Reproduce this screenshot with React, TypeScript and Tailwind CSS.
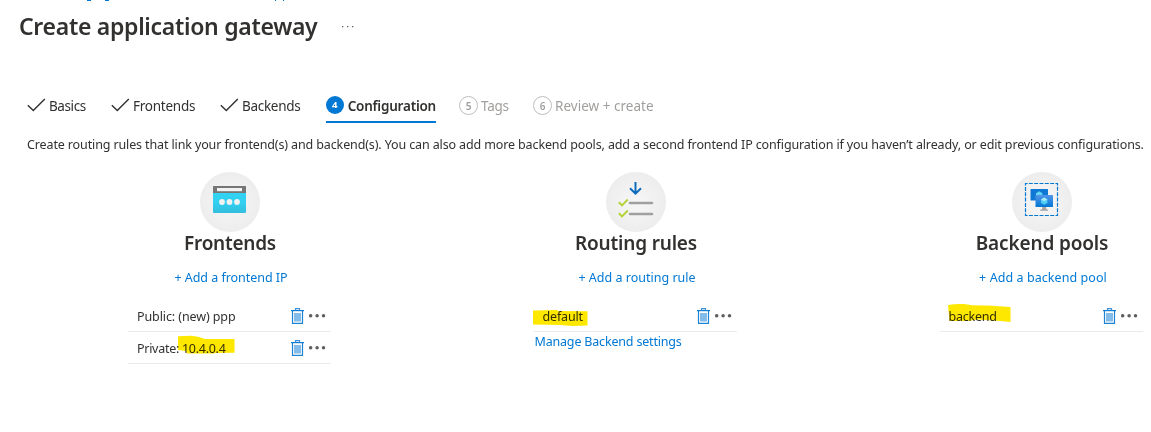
import type { ReactNode } from "react";

const CheckMark = () => (
  <svg className="mr-[3px] block h-5 w-[19px]" viewBox="0 0 19 20" fill="none">
    <path d="M0.8 9.3 L6.3 14.6 L17.8 3" stroke="#323130" strokeWidth="1.4" />
  </svg>
);

const Trash = () => (
  <svg className="block h-4 w-[13px]" viewBox="0 0 13 16" fill="none">
    <path d="M0 2.6H13" stroke="#0f7bd0" strokeWidth="1.2" />
    <path d="M4.5 2.5V0.7H8.5V2.5" stroke="#3c93dc" strokeWidth="1.2" />
    <path d="M1.5 3V15.3H11.5V3" stroke="#1f83d4" strokeWidth="1.2" />
    <path d="M3 5H10V13.5H3Z" fill="#83bbe9" />
  </svg>
);

const Dots = () => (
  <svg className="ml-[5px] block h-4 w-[18px]" viewBox="0 0 18 16" fill="#605e5c">
    <circle cx="1.7" cy="7.7" r="1.75" />
    <circle cx="8.1" cy="7.7" r="1.75" />
    <circle cx="14.5" cy="7.7" r="1.75" />
  </svg>
);

const FrontendIcon = () => (
  <svg className="block h-[60px] w-[60px]" viewBox="0 0 60 60">
    <defs>
      <linearGradient id="fe" x1="0" y1="0" x2="0" y2="1">
        <stop offset="0" stopColor="#32d4f5" />
        <stop offset="0.6" stopColor="#32d0f1" />
        <stop offset="1" stopColor="#32bedd" />
      </linearGradient>
    </defs>
    <rect x="13" y="14" width="33" height="27" rx="1" fill="url(#fe)" />
    <path d="M13 21V15a1 1 0 0 1 1-1H45a1 1 0 0 1 1 1V21Z" fill="#767676" />
    <rect x="17" y="16" width="25" height="3.2" fill="#f2f2f2" />
    <circle cx="22" cy="30" r="2.9" fill="#f2f2f2" />
    <circle cx="29.5" cy="30" r="2.9" fill="#f2f2f2" />
    <circle cx="37" cy="30" r="2.9" fill="#f2f2f2" />
  </svg>
);

const RulesIcon = () => (
  <svg className="block h-[60px] w-[60px]" viewBox="0 0 60 60" fill="none">
    <path d="M29.5 10V21.5M24 16.2L29.5 21.7L35 16.2" stroke="#0f6cbd" strokeWidth="2" />
    <path d="M24 31H46M24 42H46" stroke="#a0a0a0" strokeWidth="2.6" strokeLinecap="round" />
    <path d="M12.8 30.2L16 33.3L21.8 27.5M12.8 41.2L16 44.3L21.8 38.5" stroke="#b4d335" strokeWidth="1.9" />
  </svg>
);

const PoolIcon = () => (
  <svg className="block h-[60px] w-[60px]" viewBox="0 0 60 60" fill="none">
    <defs>
      <linearGradient id="scr" x1="0" y1="1" x2="0" y2="0">
        <stop offset="0" stopColor="#0078d4" />
        <stop offset="1" stopColor="#5495ea" />
      </linearGradient>
    </defs>
    <rect x="13.5" y="11.5" width="32" height="32" stroke="#0078d4" strokeWidth="1.2" strokeDasharray="4 1.33" strokeDashoffset="2" />
    <rect x="18.5" y="17" width="17.5" height="11.5" rx="0.5" fill="#0f78d4" />
    <path d="M24 23.5V21.2L27.2 19.2L30.4 21.2V23.5Z" fill="#62d5f4" />
    <path d="M30.4 35h3.6l.5 2.6h1.5v1.2H28.2v-1.2h1.7Z" fill="#a3a3a3" />
    <rect x="23.5" y="23" width="17.5" height="12" rx="0.5" fill="url(#scr)" />
    <path d="M32.2 25.6L35.4 27.4V31L32.2 32.8L29 31V27.4Z" fill="#50cdf2" />
    <path d="M32.2 25.6L35.4 27.4L32.2 29.2L29 27.4Z" fill="#a9ecfb" />
  </svg>
);

function Column({ icon, title, titleClass, link, linkClass, children }: {
  icon: ReactNode;
  title: string;
  titleClass: string;
  link: string;
  linkClass: string;
  children: ReactNode;
}) {
  return (
    <section className="flex w-[203px] flex-col">
      <div className="ml-[72px] h-[60px] w-[60px] rounded-full bg-radial from-[#f7f7f7] to-[#e9e9e9]">{icon}</div>
      <h2 className={`ml-px text-center text-[19px] leading-[22px] font-[560] ${titleClass}`}>{title}</h2>
      <a className={`mt-3.5 mb-3 ml-[3px] block text-center leading-5 text-[#0078d4] ${linkClass}`}>{link}</a>
      {children}
    </section>
  );
}

function Row({ children }: { children: ReactNode }) {
  return (
    <div className="flex h-8 items-center border-b border-[#edebe9] pr-1 pl-[9px]">
      <div className="relative flex-1 pt-0.5 leading-5">{children}</div>
      <Trash />
      <Dots />
    </div>
  );
}

const Marker = ({ d, place }: { d: string; place: string }) => (
  <svg className={`absolute h-5 w-[66px] mix-blend-multiply ${place}`} viewBox="0 0 66 20">
    <path d={d} fill="#ffe800" />
  </svg>
);

export default function App() {
  return (
    <main className="h-[432px] w-[1151px] overflow-hidden bg-white font-['Noto_Sans',sans-serif] text-[12.5px] whitespace-nowrap text-[#323130]">
      <svg className="block h-2.5 w-full" viewBox="0 0 1151 10" fill="#0078d4">
        <path d="M87 0h4v1h-4zM105 0h4v1h-4zM275 0h1v1h-1zM283 0h1v1h-1z" />
      </svg>
      <header className="flex h-8 items-center pl-[19px]">
        <h1 className="w-[323px] text-[23px] leading-[34px] font-[560] tracking-[-0.3px]">Create application gateway</h1>
        <svg className="h-3 w-3" viewBox="0 0 12 12" fill="#605e5c">
          <path d="M0 6h1.3v1.3H0zM5 6h1.3v1.3H5zM10 6h1.3v1.3H10z" />
        </svg>
      </header>

      <nav className="mt-[54px] flex h-[27px] pl-[27px] text-[13.5px] leading-5">
        <div className="flex w-[84px]"><CheckMark /><span className="tracking-[-0.4px]">Basics</span></div>
        <div className="flex w-[109px]"><CheckMark /><span className="tracking-[-0.25px]">Frontends</span></div>
        <div className="flex w-[106px]"><CheckMark /><span className="tracking-[-0.3px]">Backends</span></div>
        <div className="flex w-[110px] border-b-2 border-[#0078d4]">
          <span className="mr-1 flex h-[18px] w-[18px] items-center justify-center rounded-full bg-[#0078d4] text-[9.5px] font-bold text-white">4</span>
          <span className="font-semibold tracking-[-0.22px]">Configuration</span>
        </div>
        <div className="ml-[23px] flex w-[74px] text-[#a19f9d]">
          <span className="mr-1 flex h-[19px] w-[19px] items-center justify-center rounded-full border border-[#c0bebc] text-[10px] font-semibold">5</span>
          <span className="-ml-px tracking-[-0.3px]">Tags</span>
        </div>
        <div className="flex text-[#a19f9d]">
          <span className="mr-1 flex h-[19px] w-[19px] items-center justify-center rounded-full border border-[#c0bebc] text-[10px] font-semibold">6</span>
          <span className="-ml-px tracking-[0.02px]">Review + create</span>
        </div>
      </nav>

      <p className="mt-3 -mb-px pl-[27px] leading-5 tracking-[-0.125px]">
        Create routing rules that link your frontend(s) and backend(s). You can also add more backend pools, add a second frontend IP configuration if you haven’t already, or edit previous configurations.
      </p>

      <div className="mt-[18px] flex gap-[203px] pl-32">
        <Column icon={<FrontendIcon />} title="Frontends" titleClass="tracking-[-0.25px]" link="+ Add a frontend IP" linkClass="tracking-[-0.03px]">
          <Row><span className="tracking-[-0.1px]">Public: (new) ppp</span></Row>
          <Row>
            <span className="tracking-[-0.28px]">Private: 10.4.0.4</span>
            <Marker place="top-[-2px] left-[41px]" d="M0 1.2L13 0.8Q20 1.3 27 4H56.5V17.8L37 18L36 18.5H9L8 16L0 15Z" />
          </Row>
        </Column>
        <Column icon={<RulesIcon />} title="Routing rules" titleClass="tracking-[-0.18px]" link="+ Add a routing rule" linkClass="tracking-[0.01px]">
          <Row>
            <span className="ml-[-0.5px] tracking-[-0.15px]">default</span>
            <Marker place="top-[3px] left-[-10px]" d="M0 2.5L24 2L25 3L54.5 3.2V17.5L40 18L27 17L0 16.5Z" />
          </Row>
          <a className="ml-[0.5px] pt-px block leading-[18px] tracking-[-0.18px] text-[#0078d4]">Manage Backend settings</a>
        </Column>
        <Column icon={<PoolIcon />} title="Backend pools" titleClass="tracking-[-0.14px]" link="+ Add a backend pool" linkClass="tracking-[0.07px]">
          <Row>
            <span className="ml-[-0.5px] tracking-[-0.22px]">backend</span>
            <Marker place="top-[-2px] left-[-1px]" d="M0 2Q8 0.5 16 1Q26 3 40 2.4L62.5 4V19L52 18L30 16.5L20 18H1.5Z" />
          </Row>
        </Column>
      </div>
    </main>
  );
}
